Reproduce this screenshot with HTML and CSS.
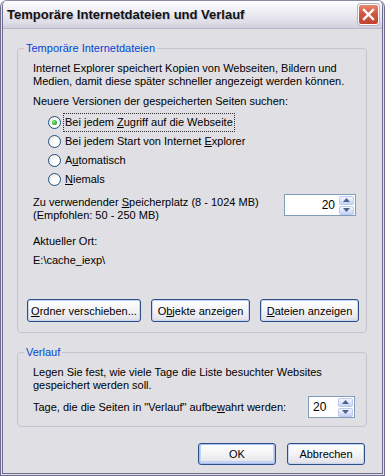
FILE: index.html
```html
<!DOCTYPE html>
<html lang="de">
<head>
  <meta charset="UTF-8" />
  <title>Temporäre Internetdateien und Verlauf</title>
  <link rel="stylesheet" href="styles.css">
</head>
<body>
  <div class="window">
    <div class="titlebar">
      <span class="title">Temporäre Internetdateien und Verlauf</span>
      <div class="close">
        <svg width="13" height="13" viewBox="0 0 13 13">
          <path d="M2 2 L11 11 M11 2 L2 11" stroke="#fff" stroke-width="2.4" stroke-linecap="square" />
        </svg>
      </div>
    </div>

    <div class="content">
      <fieldset class="group group-temp">
        <legend>Temporäre Internetdateien</legend>
        <p class="text">Internet Explorer speichert Kopien von Webseiten, Bildern und<br>Medien, damit diese später schneller angezeigt werden können.</p>
        <p class="text check-label">Neuere Versionen der gespeicherten Seiten suchen:</p>

        <div class="radios">
          <label class="radio checked"><span class="circle"></span><span class="radio-text focus">Bei jedem <u>Z</u>ugriff auf die Webseite</span></label>
          <label class="radio"><span class="circle"></span><span class="radio-text">Bei jedem Start von Internet <u>E</u>xplorer</span></label>
          <label class="radio"><span class="circle"></span><span class="radio-text">A<u>u</u>tomatisch</span></label>
          <label class="radio"><span class="circle"></span><span class="radio-text"><u>N</u>iemals</span></label>
        </div>

        <div class="space-row">
          <p class="text">Zu verwendender <u>S</u>peicherplatz (8 - 1024 MB)<br>(Empfohlen: 50 - 250 MB)</p>
          <div class="spin spin-size">
            <span class="spin-value right">20</span>
            <div class="spin-btns">
              <span class="spin-btn"><svg width="7" height="4" viewBox="0 0 7 4"><path d="M0 4 L3.5 0 L7 4 Z" fill="#4d6185" /></svg></span>
              <span class="spin-btn"><svg width="7" height="4" viewBox="0 0 7 4"><path d="M0 0 L3.5 4 L7 0 Z" fill="#4d6185" /></svg></span>
            </div>
          </div>
        </div>

        <p class="text location-label">Aktueller Ort:</p>
        <p class="text location">E:\cache_iexp\</p>

        <div class="group-buttons">
          <button class="xp-btn btn-wide"><u>O</u>rdner verschieben...</button>
          <button class="xp-btn">O<u>b</u>jekte anzeigen</button>
          <button class="xp-btn"><u>D</u>ateien anzeigen</button>
        </div>
      </fieldset>

      <fieldset class="group group-history">
        <legend>Verlauf</legend>
        <p class="text">Legen Sie fest, wie viele Tage die Liste besuchter Websites<br>gespeichert werden soll.</p>
        <div class="days-row">
          <p class="text">Tage, die die Seiten in "Verlauf" aufbe<u>w</u>ahrt werden:</p>
          <div class="spin spin-days">
            <span class="spin-value">20</span>
            <div class="spin-btns">
              <span class="spin-btn"><svg width="7" height="4" viewBox="0 0 7 4"><path d="M0 4 L3.5 0 L7 4 Z" fill="#4d6185" /></svg></span>
              <span class="spin-btn"><svg width="7" height="4" viewBox="0 0 7 4"><path d="M0 0 L3.5 4 L7 0 Z" fill="#4d6185" /></svg></span>
            </div>
          </div>
        </div>
      </fieldset>

      <div class="dialog-buttons">
        <button class="xp-btn dialog-btn default">OK</button>
        <button class="xp-btn dialog-btn">Abbrechen</button>
      </div>
    </div>
  </div>
</body>
</html>
```

FILE: styles.css
```css
* {
  box-sizing: border-box;
}

body {
  margin: 0;
  font-family: 'Liberation Sans', Arial, sans-serif;
  font-size: 11px;
  color: #000;
  background: #fff;
}

.window {
  width: 385px;
  height: 476px;
  background: #e0dfe3;
  border: 3px double #6f6d8f;
  border-top: none;
  border-radius: 7px 7px 0 0;
  overflow: hidden;
}

.titlebar {
  height: 29px;
  display: flex;
  align-items: center;
  justify-content: space-between;
  padding: 0 4px 0 5px;
  background: linear-gradient(to bottom, #fdfdfe 0%, #eeeef3 40%, #dedde6 80%, #cfcedb 100%);
  border-top: 1px solid #8a89a6;
  border-bottom: 1px solid #b9b8c8;
  margin: 0 -1px;
}

.title {
  font-weight: bold;
  font-size: 13px;
  color: #111;
  text-shadow: 1px 1px 0 #c8c8d4;
}

.close {
  width: 21px;
  height: 21px;
  border: 1px solid #fff;
  border-radius: 3px;
  background: linear-gradient(to bottom, #e9876f, #d25740 45%, #c24330);
  display: flex;
  align-items: center;
  justify-content: center;
  box-shadow: 0 0 0 1px #b4b2c4;
}

.content {
  padding: 13px 15px 0 14px;
}

.text {
  margin: 0;
  line-height: 13px;
  padding-left: 6px;
}

.group {
  margin: 0;
  border: 1px solid #c5c4cf;
  border-radius: 4px;
  padding: 0 7px 0 9px;
}

.group legend {
  color: #0046d5;
  line-height: 13px;
  padding: 0 2px;
  margin-left: -3px;
}

.group-temp {
  padding-top: 7px;
  padding-bottom: 10px;
}

.check-label {
  margin-top: 7px;
}

.radios {
  margin-top: 5px;
  padding-left: 21px;
}

.radio {
  display: flex;
  align-items: center;
  height: 19px;
}

.circle {
  width: 13px;
  height: 13px;
  border: 1px solid #1c5180;
  border-radius: 50%;
  background: radial-gradient(circle at 65% 65%, #fff 30%, #e2e2dd 100%);
  display: flex;
  align-items: center;
  justify-content: center;
  margin-right: 2px;
}

.checked .circle::after {
  content: "";
  width: 5px;
  height: 5px;
  border-radius: 50%;
  background: radial-gradient(circle at 40% 40%, #8ee88e, #21a121 70%);
}

.radio-text {
  line-height: 13px;
  padding: 2px 1px;
  border: 1px dotted transparent;
}

.radio-text.focus {
  border-color: #333;
}

.space-row {
  display: flex;
  justify-content: space-between;
  align-items: flex-start;
  margin-top: 7px;
}

.spin {
  display: flex;
  align-items: center;
  background: #fff;
  border: 1px solid #7f9db9;
}

.spin-size {
  width: 72px;
  height: 22px;
  margin-top: -2px;
  margin-right: 3px;
}

.spin-days {
  width: 47px;
  height: 22px;
  margin-right: 4px;
}

.spin-value {
  flex: 1;
  padding: 0 4px;
  font-size: 12px;
}

.spin-value.right {
  text-align: right;
  padding-right: 4px;
}

.spin-btns {
  display: flex;
  flex-direction: column;
  gap: 1px;
  margin-right: 1px;
}

.spin-btn {
  width: 15px;
  height: 9px;
  display: flex;
  align-items: center;
  justify-content: center;
  border: 1px solid #bccbeb;
  border-radius: 2px;
  background: linear-gradient(to bottom, #f4f7fe, #c6d3f7);
}

.location-label {
  margin-top: 13px;
}

.location {
  margin-top: 6px;
}

.group-buttons {
  display: flex;
  gap: 10px;
  margin-top: 32px;
}

.xp-btn {
  height: 23px;
  width: 99px;
  font-family: inherit;
  font-size: 11px;
  color: #000;
  padding: 0;
  border: 1px solid #2c4f8a;
  border-radius: 3px;
  background: linear-gradient(to bottom, #ffffff 0%, #f4f4f6 50%, #e4e4ea 90%, #d2d2dc 100%);
  box-shadow: inset 0 0 0 1px #c7d5f0;
}

.btn-wide {
  width: 114px;
}

.group-history {
  margin-top: 13px;
  padding-top: 7px;
  padding-bottom: 8px;
}

.days-row {
  display: flex;
  justify-content: space-between;
  align-items: center;
  margin-top: 4px;
}

.dialog-buttons {
  display: flex;
  justify-content: flex-end;
  gap: 11px;
  margin-top: 16px;
  padding-right: 2px;
}

.dialog-btn {
  width: 78px;
  height: 22px;
}

.dialog-btn.default {
  box-shadow: inset 0 0 0 1px #a9c0ee, inset 0 -1px 0 2px #c3d3f5;
}
```
